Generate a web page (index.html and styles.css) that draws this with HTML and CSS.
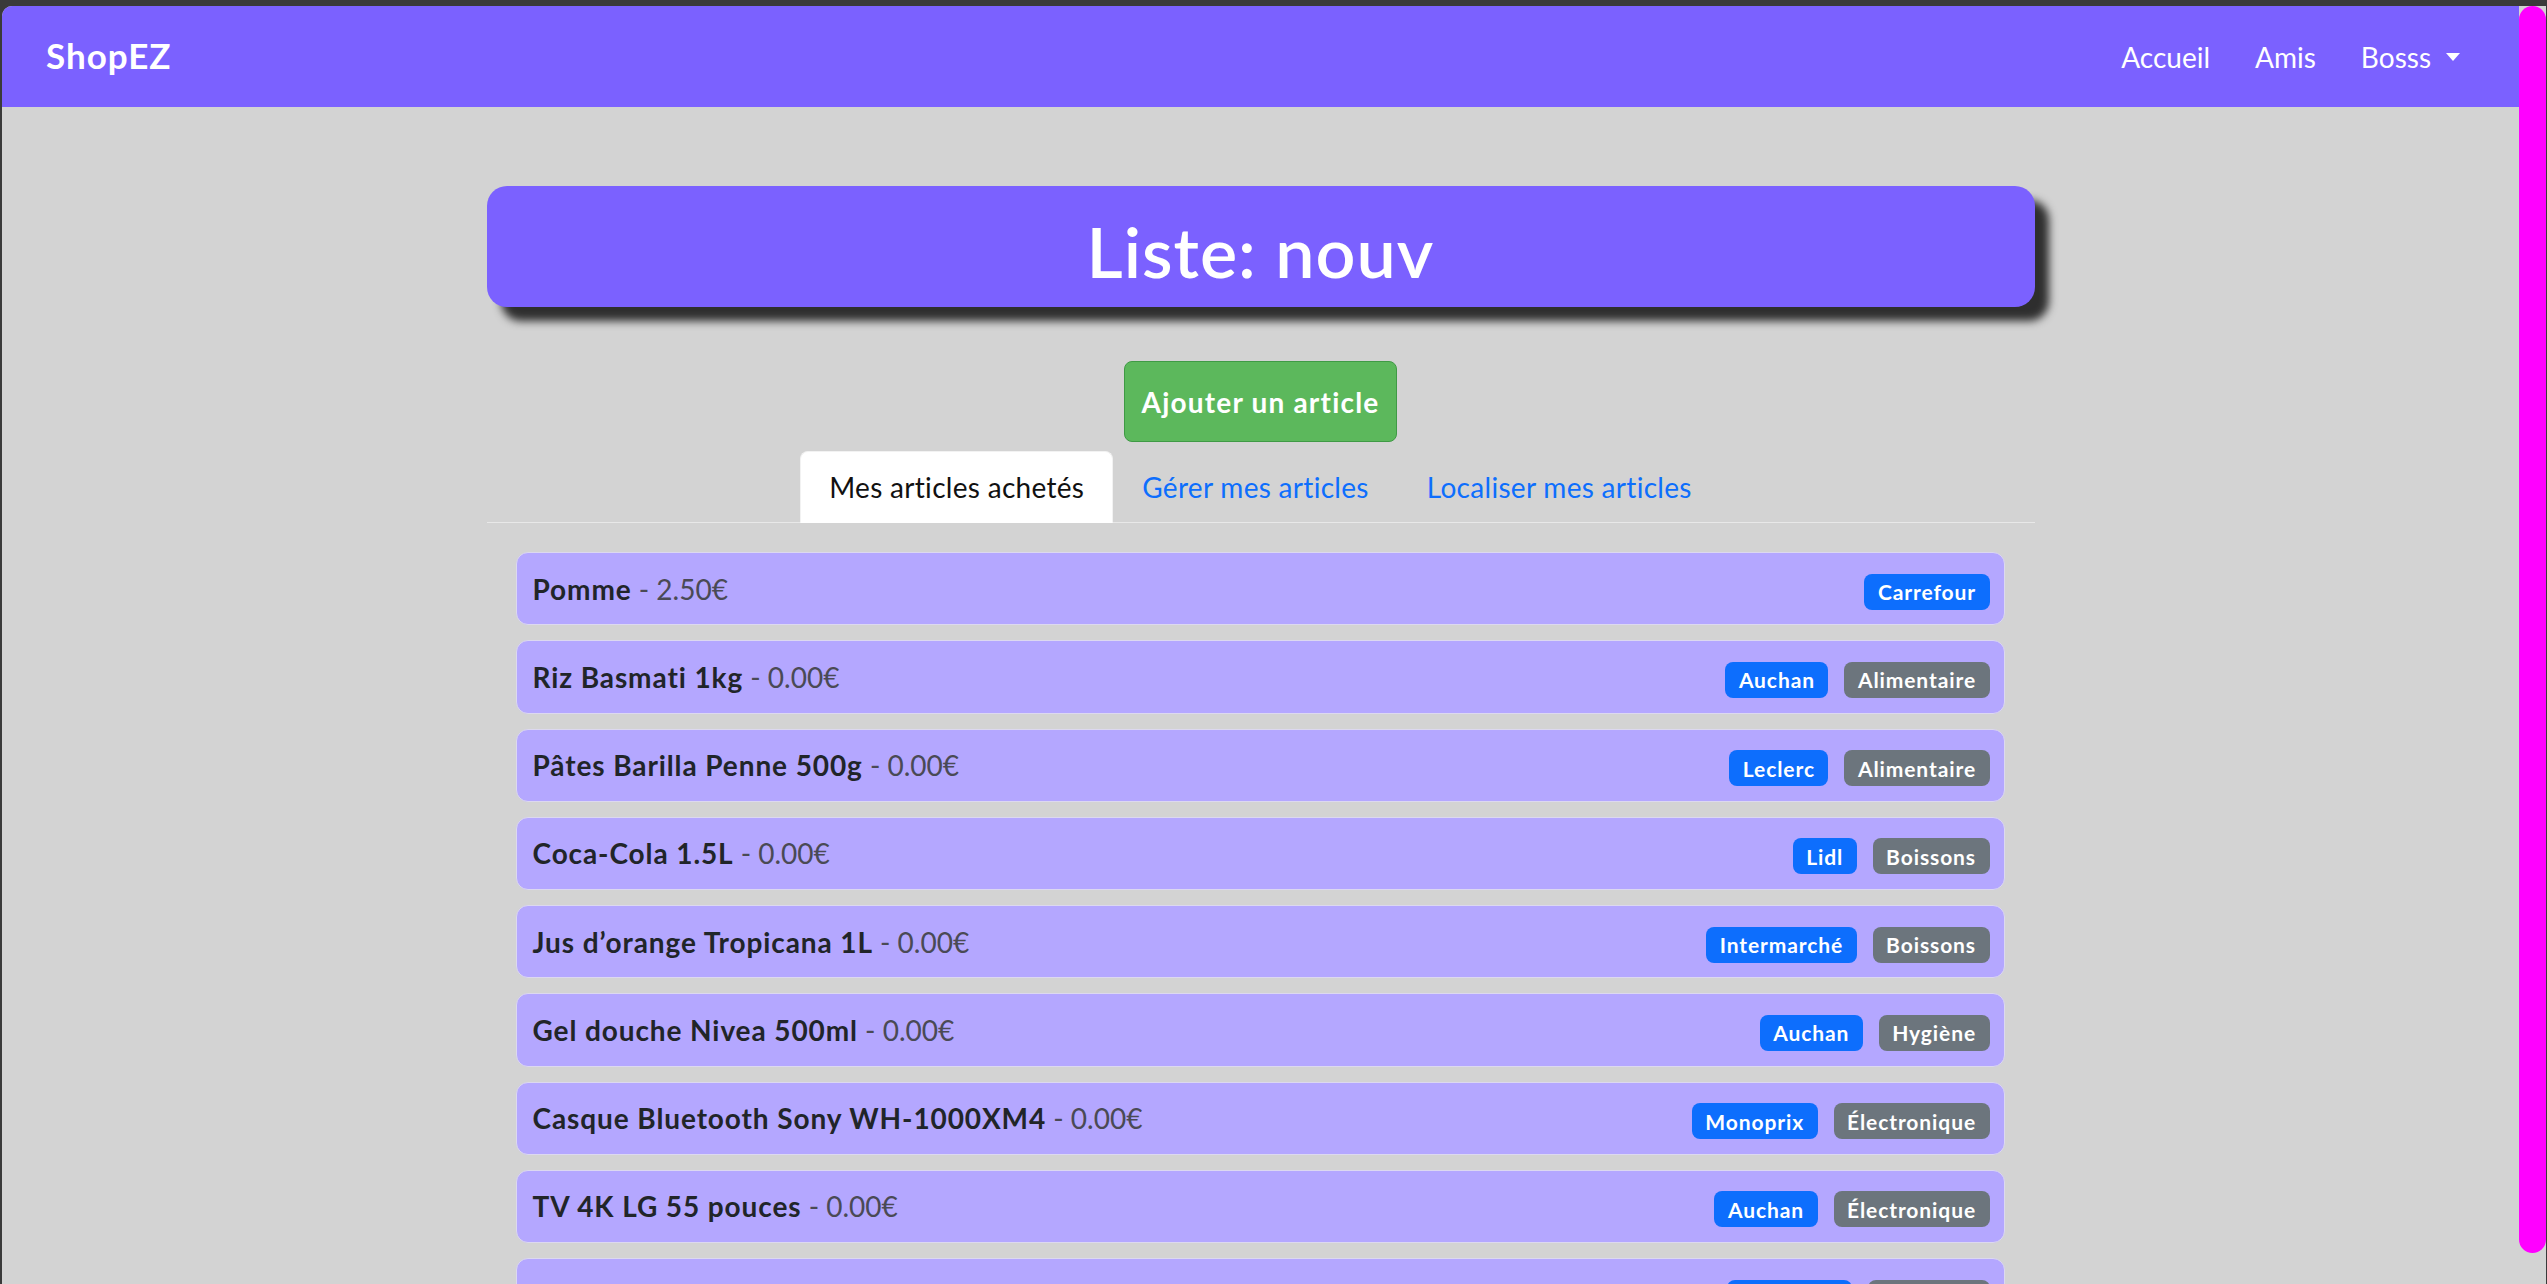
FILE: index.html
```html
<!DOCTYPE html>
<html lang="fr">
<head>
<meta charset="utf-8">
<title>ShopEZ - Liste: nouv</title>
<link rel="stylesheet" href="styles.css">
</head>
<body>
<div class="window">
  <div class="viewport">
    <nav class="navbar">
      <a class="brand" href="#">ShopEZ</a>
      <ul class="nav-links">
        <li><a href="#">Accueil</a></li>
        <li><a href="#">Amis</a></li>
        <li><a href="#" class="dropdown">Bosss<span class="caret"></span></a></li>
      </ul>
    </nav>

    <main class="container">
      <div class="title-banner"><h1>Liste: nouv</h1></div>

      <div class="actions"><button class="btn-add" type="button">Ajouter un article</button></div>

      <ul class="tabs">
        <li><a href="#" class="tab active">Mes articles achetés</a></li>
        <li><a href="#" class="tab">Gérer mes articles</a></li>
        <li><a href="#" class="tab">Localiser mes articles</a></li>
      </ul>

      <ul class="items">
        <li class="item"><span class="label"><b>Pomme</b><span class="price"> - 2.50€</span></span><span class="badges"><span class="badge shop">Carrefour</span></span></li>
        <li class="item"><span class="label"><b>Riz Basmati 1kg</b><span class="price"> - 0.00€</span></span><span class="badges"><span class="badge shop">Auchan</span><span class="badge cat">Alimentaire</span></span></li>
        <li class="item"><span class="label"><b>Pâtes Barilla Penne 500g</b><span class="price"> - 0.00€</span></span><span class="badges"><span class="badge shop">Leclerc</span><span class="badge cat">Alimentaire</span></span></li>
        <li class="item"><span class="label"><b>Coca-Cola 1.5L</b><span class="price"> - 0.00€</span></span><span class="badges"><span class="badge shop">Lidl</span><span class="badge cat">Boissons</span></span></li>
        <li class="item"><span class="label"><b>Jus d’orange Tropicana 1L</b><span class="price"> - 0.00€</span></span><span class="badges"><span class="badge shop">Intermarché</span><span class="badge cat">Boissons</span></span></li>
        <li class="item"><span class="label"><b>Gel douche Nivea 500ml</b><span class="price"> - 0.00€</span></span><span class="badges"><span class="badge shop">Auchan</span><span class="badge cat">Hygiène</span></span></li>
        <li class="item"><span class="label"><b>Casque Bluetooth Sony WH-1000XM4</b><span class="price"> - 0.00€</span></span><span class="badges"><span class="badge shop">Monoprix</span><span class="badge cat">Électronique</span></span></li>
        <li class="item"><span class="label"><b>TV 4K LG 55 pouces</b><span class="price"> - 0.00€</span></span><span class="badges"><span class="badge shop">Auchan</span><span class="badge cat">Électronique</span></span></li>
        <li class="item"><span class="label"><b>Lessive Ariel 2L</b><span class="price"> - 0.00€</span></span><span class="badges"><span class="badge shop">Carrefour</span><span class="badge cat">Entretien</span></span></li>
      </ul>
    </main>
  </div>
  <div class="scrollbar"><div class="thumb"></div></div>
</div>
</body>
</html>
```

FILE: styles.css
```css
* { box-sizing: border-box; }

html, body {
  margin: 0;
  height: 100%;
  overflow: hidden;
  background: #3a3a3a;
}

body {
  padding: 6px 1px 0 2px;
  font-family: Lato, "Noto Sans", "Liberation Sans", sans-serif;
  font-size: 28px;
  line-height: 1.5;
  color: #212529;
}

.window {
  display: flex;
  height: 1278px;
  background: #d3d3d3;
  border-top-left-radius: 10px;
  overflow: hidden;
}

.viewport {
  flex: 1;
  overflow: hidden;
}

.scrollbar {
  width: 27px;
  background: #d3d3d3;
}

.thumb {
  height: 1247px;
  background: #ff00ff;
  border-radius: 14px;
}

/* navbar */
.navbar {
  height: 101px;
  background: #7b61ff;
  display: flex;
  align-items: center;
  justify-content: space-between;
  padding: 0 59px 0 44px;
}

.brand {
  color: #fff;
  font-weight: 700;
  font-size: 35px;
  letter-spacing: 1px;
  text-decoration: none;
  line-height: 1;
  padding-bottom: 2px;
}

.nav-links {
  list-style: none;
  margin: 0;
  padding: 0;
  display: flex;
  gap: 45px;
}

.nav-links a {
  color: #fff;
  text-decoration: none;
  font-size: 28px;
  display: flex;
  align-items: center;
}

.caret {
  display: inline-block;
  margin-left: 15px;
  width: 0;
  height: 0;
  border-top: 8px solid #fff;
  border-left: 7.5px solid transparent;
  border-right: 7.5px solid transparent;
}

/* main container */
.container {
  width: 1548px;
  margin: 0 auto;
}

.title-banner {
  margin-top: 79px;
  height: 121px;
  background: #7b61ff;
  border-radius: 20px;
  box-shadow: 14px 14px 8px rgba(0, 0, 0, 0.78);
  display: flex;
  align-items: center;
  justify-content: center;
}

.title-banner h1 {
  margin: 0;
  padding-top: 8px;
  color: #fff;
  font-size: 70px;
  font-weight: 600;
  letter-spacing: 1px;
  line-height: 1.2;
}

.actions {
  margin-top: 54px;
  display: flex;
  justify-content: center;
}

.btn-add {
  font-family: inherit;
  font-size: 28px;
  font-weight: 700;
  letter-spacing: 1.2px;
  line-height: 42px;
  color: #fff;
  background: #5cb85c;
  border: 1px solid #3f9a45;
  border-radius: 8px;
  padding: 18.5px 17px;
}

/* tabs */
.tabs {
  list-style: none;
  margin: 9px 0 0;
  padding: 0;
  display: flex;
  justify-content: center;
  border-bottom: 1px solid #e8e8e8;
}

.tab {
  display: block;
  margin-bottom: -1px;
  padding: 14px 28px;
  line-height: 42px;
  font-size: 28px;
  letter-spacing: 0.3px;
  color: #0d6efd;
  text-decoration: none;
  border: 1px solid transparent;
  border-top-left-radius: 8px;
  border-top-right-radius: 8px;
}

.tab.active {
  color: #111;
  background: #fff;
  border-color: #f2f2f2 #f2f2f2 #fff;
}

/* items */
.items {
  list-style: none;
  margin: 29px 0 0;
  padding: 0 30px 0 29px;
}

.item {
  display: flex;
  align-items: center;
  justify-content: space-between;
  padding: 14.625px 14px 14.625px 16px;
  margin-bottom: 15px;
  line-height: 42px;
  background: #b4a7ff;
  border: 1px solid #dcd8f0;
  border-radius: 12px;
}

.label b {
  font-weight: 700;
  letter-spacing: 0.9px;
  color: #212529;
}

.price {
  color: #4a4a55;
}

.badges {
  display: flex;
  gap: 16px;
  padding-top: 6px;
}

.badge {
  display: inline-block;
  font-size: 21px;
  font-weight: 700;
  letter-spacing: 0.9px;
  line-height: 1;
  color: #fff;
  padding: 7.5px 13.5px;
  border-radius: 8px;
}

.badge.shop { background: #0d6efd; }
.badge.cat { background: #6c757d; }
```
